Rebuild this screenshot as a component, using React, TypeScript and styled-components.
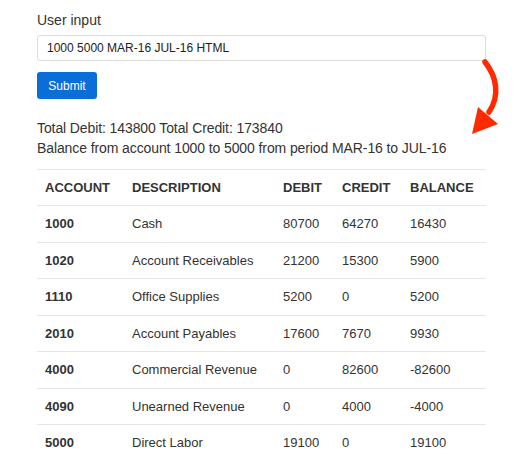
import styled, { createGlobalStyle } from 'styled-components'

const GlobalStyle = createGlobalStyle`
  body {
    margin: 0;
    background: #ffffff;
    font-family: "Liberation Sans", Arial, sans-serif;
    color: #333333;
  }
`

interface Row {
  account: string
  description: string
  debit: string
  credit: string
  balance: string
}

const rows: Row[] = [
  { account: '1000', description: 'Cash', debit: '80700', credit: '64270', balance: '16430' },
  { account: '1020', description: 'Account Receivables', debit: '21200', credit: '15300', balance: '5900' },
  { account: '1110', description: 'Office Supplies', debit: '5200', credit: '0', balance: '5200' },
  { account: '2010', description: 'Account Payables', debit: '17600', credit: '7670', balance: '9930' },
  { account: '4000', description: 'Commercial Revenue', debit: '0', credit: '82600', balance: '-82600' },
  { account: '4090', description: 'Unearned Revenue', debit: '0', credit: '4000', balance: '-4000' },
  { account: '5000', description: 'Direct Labor', debit: '19100', credit: '0', balance: '19100' },
]

const App = () => {
  return (
    <Page>
      <GlobalStyle />
      <Label htmlFor='query'>User input</Label>
      <Input id='query' defaultValue='1000 5000 MAR-16 JUL-16 HTML' />
      <SubmitButton type='button'>Submit</SubmitButton>
      <Summary>
        <p>Total Debit: 143800 Total Credit: 173840</p>
        <p>Balance from account 1000 to 5000 from period MAR-16 to JUL-16</p>
      </Summary>
      <Table>
        <colgroup>
          <col style={{ width: 87 }} />
          <col style={{ width: 151 }} />
          <col style={{ width: 59 }} />
          <col style={{ width: 68 }} />
          <col />
        </colgroup>
        <thead>
          <tr>
            <Th>Account</Th>
            <Th>Description</Th>
            <Th>Debit</Th>
            <Th>Credit</Th>
            <Th>Balance</Th>
          </tr>
        </thead>
        <tbody>
          {rows.map((r) => (
            <tr key={r.account}>
              <Td $bold>{r.account}</Td>
              <Td>{r.description}</Td>
              <Td>{r.debit}</Td>
              <Td>{r.credit}</Td>
              <Td>{r.balance}</Td>
            </tr>
          ))}
        </tbody>
      </Table>
      <Arrow viewBox='0 0 45 90' width='45' height='90'>
        <path d='M25 12 C37 27 40 46 29 62' fill='none' stroke='#ff2a00' strokeWidth='5.5' strokeLinecap='round' />
        <polygon points='18,57 38,74 12,84' fill='#ff2a00' />
      </Arrow>
    </Page>
  )
}

export default App

const Page = styled.div`
  position: relative;
  width: 449px;
  margin-left: 37px;
  padding-top: 10px;
  display: flex;
  flex-direction: column;
  align-items: flex-start;
`

const Label = styled.label`
  font-size: 14px;
  line-height: 20px;
  margin-bottom: 5px;
`

const Input = styled.input`
  box-sizing: border-box;
  width: 100%;
  height: 26px;
  padding: 0 9px;
  border: 1px solid #dcdcdc;
  border-radius: 3px;
  font-family: "Liberation Sans", Arial, sans-serif;
  font-size: 12px;
  color: #222222;
  outline: none;
`

const SubmitButton = styled.button`
  margin-top: 11px;
  width: 60px;
  height: 27px;
  border: none;
  border-radius: 3px;
  background: #0a6ed8;
  color: #ffffff;
  font-family: "Liberation Sans", Arial, sans-serif;
  font-size: 12px;
  padding: 0;
`

const Summary = styled.div`
  margin-top: 19px;
  font-size: 14px;
  line-height: 20px;
  letter-spacing: -0.1px;
  & > p {
    margin: 0;
  }
`

const Table = styled.table`
  margin-top: 11px;
  width: 100%;
  border-collapse: collapse;
  table-layout: fixed;
  font-size: 13px;
  color: #333333;
`

const Th = styled.th`
  text-align: left;
  text-transform: uppercase;
  font-weight: bold;
  height: 35px;
  padding: 0 8px;
  border-top: 1px solid #e6e6e6;
  vertical-align: middle;
`

const Td = styled.td<{ $bold?: boolean }>`
  height: 35.5px;
  padding: 0 8px;
  border-top: 1px solid #e6e6e6;
  font-weight: ${(p) => (p.$bold ? 'bold' : 'normal')};
  white-space: nowrap;
  vertical-align: middle;
`

const Arrow = styled.svg`
  position: absolute;
  left: 423px;
  top: 50px;
`
